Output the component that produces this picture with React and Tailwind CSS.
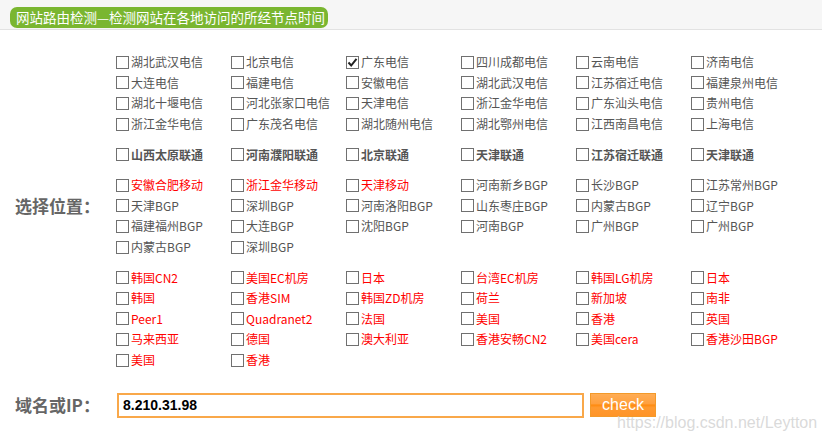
const telecom = [
  "湖北武汉电信", "北京电信", "广东电信", "四川成都电信", "云南电信", "济南电信",
  "大连电信", "福建电信", "安徽电信", "湖北武汉电信", "江苏宿迁电信", "福建泉州电信",
  "湖北十堰电信", "河北张家口电信", "天津电信", "浙江金华电信", "广东汕头电信", "贵州电信",
  "浙江金华电信", "广东茂名电信", "湖北随州电信", "湖北鄂州电信", "江西南昌电信", "上海电信",
];

const unicom = ["山西太原联通", "河南濮阳联通", "北京联通", "天津联通", "江苏宿迁联通", "天津联通"];

const bgp = [
  { name: "安徽合肥移动", red: true }, { name: "浙江金华移动", red: true }, { name: "天津移动", red: true },
  { name: "河南新乡BGP" }, { name: "长沙BGP" }, { name: "江苏常州BGP" },
  { name: "天津BGP" }, { name: "深圳BGP" }, { name: "河南洛阳BGP" },
  { name: "山东枣庄BGP" }, { name: "内蒙古BGP" }, { name: "辽宁BGP" },
  { name: "福建福州BGP" }, { name: "大连BGP" }, { name: "沈阳BGP" },
  { name: "河南BGP" }, { name: "广州BGP" }, { name: "广州BGP" },
  { name: "内蒙古BGP" }, { name: "深圳BGP" },
];

const overseas = [
  "韩国CN2", "美国EC机房", "日本", "台湾EC机房", "韩国LG机房", "日本",
  "韩国", "香港SIM", "韩国ZD机房", "荷兰", "新加坡", "南非",
  "Peer1", "Quadranet2", "法国", "美国", "香港", "英国",
  "马来西亚", "德国", "澳大利亚", "香港安畅CN2", "美国cera", "香港沙田BGP",
  "美国", "香港",
];

const Check = ({ label, checked, red, bold }) => (
  <label className="flex items-center h-[20.6px] whitespace-nowrap">
    <span className="w-[13px] h-[13px] border border-[#707070] bg-white flex items-center justify-center mr-[2px] shrink-0">
      {checked && (
        <svg width="11" height="11" viewBox="0 0 11 11">
          <path d="M1.5 5.5 L4.2 8.5 L9.5 1.8" fill="none" stroke="#222" strokeWidth="2" />
        </svg>
      )}
    </span>
    <span
      className={`text-[12px] ${red ? "text-[#ff0000]" : "text-[#555]"} ${bold ? "font-bold" : ""}`}
    >
      {label}
    </span>
  </label>
);

const Group = ({ children }) => (
  <div className="grid grid-cols-[repeat(6,115px)]">{children}</div>
);

export default function App() {
  return (
    <div
      className="relative w-[822px] h-[439px] bg-white overflow-hidden"
      style={{ fontFamily: '"Noto Sans CJK SC", "Noto Sans", sans-serif' }}
    >
      {/* Header */}
      <div className="h-[30px] bg-[#f6f6f6] border-b border-[#e2e2e2] pt-[4px] pl-[10px]">
        <div className="inline-flex items-center h-[21px] rounded-[7px] bg-[#7ab630] pl-[6px] pr-[3px] text-white text-[13.5px] leading-none whitespace-nowrap">
          网站路由检测—检测网站在各地访问的所经节点时间
        </div>
      </div>

      {/* Locations */}
      <div className="flex pt-[22px]">
        <div className="w-[116px] pl-[15px] flex items-center">
          <span className="text-[17px] font-bold text-[#666] -mt-[10px]">选择位置：</span>
        </div>
        <div className="flex flex-col gap-[10px]">
          <Group>
            {telecom.map((t, i) => (
              <Check key={i} label={t} checked={i === 2} />
            ))}
          </Group>
          <Group>
            {unicom.map((t, i) => (
              <Check key={i} label={t} bold />
            ))}
          </Group>
          <Group>
            {bgp.map((t, i) => (
              <Check key={i} label={t.name} red={t.red} />
            ))}
          </Group>
          <Group>
            {overseas.map((t, i) => (
              <Check key={i} label={t} red />
            ))}
          </Group>
        </div>
      </div>

      {/* Domain input */}
      <div className="flex items-center mt-[22px]">
        <div className="w-[117px] pl-[15px]">
          <span className="text-[17px] font-bold text-[#666]">域名或IP：</span>
        </div>
        <div className="w-[467px] h-[25px] border-2 border-[#f9a84a] flex items-center pl-[4px]">
          <span className="text-[14px] font-bold text-black" style={{ fontFamily: '"Liberation Sans", Arial, sans-serif' }}>
            8.210.31.98
          </span>
        </div>
        <button
          className="ml-[6px] w-[66px] h-[24px] border border-[#f39a2a] bg-[linear-gradient(to_bottom,#ffad55_0%,#ffa03e_45%,#ff8a0e_50%,#ff9a30_62%,#ff9428_100%)] text-white text-[16px] leading-none"
          style={{ fontFamily: '"Liberation Sans", Arial, sans-serif' }}
        >
          check
        </button>
      </div>

      {/* Watermark */}
      <div
        className="absolute left-[617px] top-[411px] text-[16px] text-[#d0d0d0]/80 whitespace-nowrap"
        style={{ fontFamily: '"Liberation Sans", Arial, sans-serif' }}
      >
        https://blog.csdn.net/Leytton
      </div>
    </div>
  );
}
